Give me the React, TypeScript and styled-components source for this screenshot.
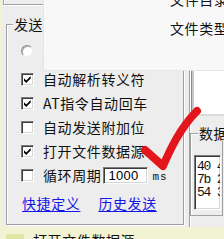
import React from 'react';
import styled, { createGlobalStyle } from 'styled-components';

const GlobalStyle = createGlobalStyle`
  html, body {
    margin: 0;
    padding: 0;
    background: #f0f2c4;
  }
`;

const Screen = styled.div`
  position: relative;
  width: 224px;
  height: 239px;
  overflow: hidden;
  background: #f2f3d2;
  display: flex;
  flex-direction: column;
  font-family: "Noto Sans CJK SC", "Noto Sans", sans-serif;
  font-size: 14px;
  letter-spacing: 0.6px;
  color: #111;
`;

const Window = styled.div`
  margin-left: 2px;
  width: 222px;
  height: 227px;
  flex-shrink: 0;
  background: #ededed;
  display: flex;
  flex-direction: column;
  overflow: hidden;
`;

const TopStub = styled.div`
  margin-left: 1px;
  width: 180px;
  height: 4px;
  flex-shrink: 0;
  border-left: 1px solid #a0a0a0;
  border-bottom: 1px solid #a0a0a0;
  box-shadow: inset 1px 0 0 #fff, 0 1px 0 #fff;
`;

const MainRow = styled.div`
  display: flex;
  align-items: flex-start;
`;

const SendGroup = styled.fieldset`
  box-sizing: border-box;
  margin: 11px 0 0 4px;
  padding: 7px 0 0 6px;
  width: 178px;
  height: 209px;
  min-width: 0;
  flex-shrink: 0;
  border: 1px solid #a0a0a0;
  box-shadow: inset 1px 1px 0 #fff, 1px 1px 0 #fff;
`;

const Legend = styled.legend<{ $offset?: number }>`
  margin-left: ${p => p.$offset ?? 0}px;
  padding: 0 1px;
  line-height: 16px;
  white-space: nowrap;
  background: #ededed;
`;

const Options = styled.div`
  display: flex;
  flex-direction: column;
  padding-left: 8px;
`;

const Row = styled.div<{ $gap?: number }>`
  display: flex;
  align-items: center;
  height: 24px;
  margin-top: ${p => p.$gap ?? 0}px;
  white-space: nowrap;
`;

const Radio = styled.span`
  box-sizing: border-box;
  width: 12px;
  height: 12px;
  border-radius: 50%;
  background: #fff;
  border: 1px solid;
  border-color: #8c8c8c #f2f2f2 #f2f2f2 #8c8c8c;
  box-shadow: inset 1px 1px 0 #b0b0b0;
  margin-right: 10px;
  flex-shrink: 0;
`;

const Box = styled.span`
  box-sizing: border-box;
  width: 13px;
  height: 13px;
  background: #fff;
  border: 1px solid;
  border-color: #7c7c7c #fff #fff #7c7c7c;
  box-shadow: inset 1px 1px 0 #3c3c3c, inset -1px -1px 0 #d6d6d6;
  margin-right: 9px;
  flex-shrink: 0;
  display: flex;
`;

const Tick = styled.svg`
  width: 11px;
  height: 11px;
`;

const Checkbox = ({ checked }: { checked?: boolean }) => (
  <Box>
    {checked && (
      <Tick viewBox="0 0 11 11">
        <polygon points="2,4.2 4.2,6.4 8.6,2 8.6,4.6 4.2,9 2,6.8" fill="#000" />
      </Tick>
    )}
  </Box>
);

const Field = styled.input`
  box-sizing: border-box;
  width: 45px;
  height: 17px;
  margin: 0 0 0 2px;
  padding: 0 0 0 4px;
  border: 1px solid;
  border-color: #7c7c7c #fff #fff #7c7c7c;
  box-shadow: inset 1px 1px 0 #3c3c3c, inset -1px -1px 0 #d6d6d6;
  background: #fff;
  font-family: "Liberation Sans", Arial, sans-serif;
  font-size: 13px;
  letter-spacing: 0.3px;
  color: #000;
  outline: none;
`;

const Unit = styled.span`
  margin-left: 4px;
  padding-top: 3px;
  font-family: "Liberation Mono", "DejaVu Sans Mono", monospace;
  font-size: 11px;
  letter-spacing: 1px;
`;

const Links = styled.div`
  display: flex;
  gap: 18px;
  margin-left: 1px;
`;

const Link = styled.a`
  color: #1616e6;
  text-decoration: underline;
  text-underline-offset: 2px;
  cursor: pointer;
`;

const SidePanel = styled.div`
  box-sizing: border-box;
  margin-left: 5px;
  width: 35px;
  height: 222px;
  flex-shrink: 0;
  display: flex;
  flex-direction: column;
  border-left: 1px solid #a0a0a0;
  box-shadow: inset 1px 0 0 #fff;
`;

const TopBox = styled.div`
  box-sizing: border-box;
  margin-left: 1px;
  height: 111px;
  flex-shrink: 0;
  background: #fff;
  border-left: 1px solid #8a8a8a;
  border-bottom: 2px solid #dcdcdc;
  box-shadow: inset 2px 0 0 #c8c8c8;
`;

const DataGroup = styled.fieldset`
  box-sizing: border-box;
  margin: 9px 0 0 0;
  padding: 14px 0 0 3px;
  width: 33px;
  height: 91px;
  min-width: 0;
  flex-shrink: 0;
  border: 1px solid #a0a0a0;
  box-shadow: inset 1px 1px 0 #fff;
`;

const ListBox = styled.div`
  box-sizing: border-box;
  width: 27px;
  height: 55px;
  overflow: hidden;
  background: #fff;
  border: 1px solid;
  border-color: #7c7c7c #fff #fff #7c7c7c;
  box-shadow: inset 1px 1px 0 #3c3c3c, inset -1px -1px 0 #d6d6d6;
  padding: 4px 0 0 2px;
  font-family: "Liberation Mono", "DejaVu Sans Mono", monospace;
  font-size: 13px;
  line-height: 13px;
  letter-spacing: -1.2px;
  white-space: pre;
`;

const BottomRow = styled.div`
  display: flex;
  align-items: flex-start;
  padding: 3px 0 0 6px;
  white-space: nowrap;
`;

const FaintMark = styled.span`
  width: 18px;
  height: 10px;
  margin: 4px 9px 0 0;
  border-radius: 2px;
  background: #dfe6a6;
  flex-shrink: 0;
`;

const Popup = styled.div`
  position: absolute;
  left: 43px;
  top: -12px;
  right: 0;
  height: 83px;
  box-sizing: border-box;
  background: #f8f8f8;
  border-left: 1px solid #e4e4e4;
  border-bottom: 1px solid #e6e6e6;
  display: flex;
  flex-direction: column;
  gap: 13px;
  padding: 3px 0 0 126px;
  line-height: 16px;
  white-space: nowrap;
`;

const Scribble = styled.svg`
  position: absolute;
  left: 0;
  top: 0;
  width: 224px;
  height: 239px;
  pointer-events: none;
`;

export default function App() {
  return (
    <>
      <GlobalStyle />
      <Screen>
        <Window>
          <TopStub />
          <MainRow>
            <SendGroup>
              <Legend>发送</Legend>
              <Options>
                <Row>
                  <Radio />
                  <span>ASCII</span>
                </Row>
                <Row $gap={4}>
                  <Checkbox checked />
                  <span>自动解析转义符</span>
                </Row>
                <Row>
                  <Checkbox checked />
                  <span>AT指令自动回车</span>
                </Row>
                <Row>
                  <Checkbox />
                  <span>自动发送附加位</span>
                </Row>
                <Row>
                  <Checkbox checked />
                  <span>打开文件数据源</span>
                </Row>
                <Row>
                  <Checkbox />
                  <span>循环周期</span>
                  <Field readOnly value="1000" />
                  <Unit>ms</Unit>
                </Row>
                <Row $gap={4}>
                  <Links>
                    <Link>快捷定义</Link>
                    <Link>历史发送</Link>
                  </Links>
                </Row>
              </Options>
            </SendGroup>
            <SidePanel>
              <TopBox />
              <DataGroup>
                <Legend $offset={4}>数据</Legend>
                <ListBox>{'40 4F\n7b 2A\n54 31'}</ListBox>
              </DataGroup>
            </SidePanel>
          </MainRow>
        </Window>
        <BottomRow>
          <FaintMark />
          <span>打开文件数据源</span>
        </BottomRow>
        <Popup>
          <span>文件目录</span>
          <span>文件类型</span>
        </Popup>
        <Scribble viewBox="0 0 224 239">
          <path
            d="M145 150 L163 166 C170 150 180 128 197 111"
            fill="none"
            stroke="#e3161b"
            strokeWidth="8"
            strokeLinecap="round"
            strokeLinejoin="round"
          />
        </Scribble>
      </Screen>
    </>
  );
}
